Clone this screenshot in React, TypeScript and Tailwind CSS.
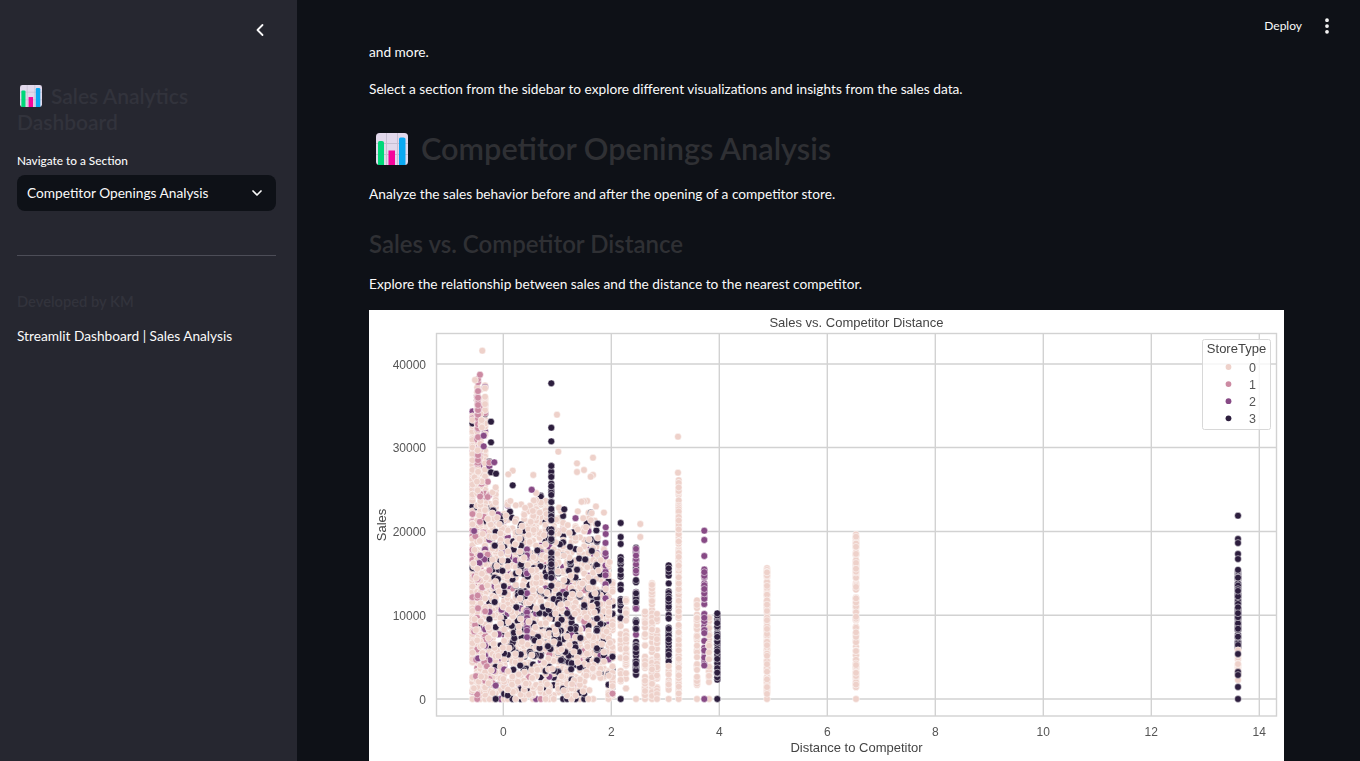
import React from 'react';
import { ChevronDown, ChevronLeft, EllipsisVertical } from 'lucide-react';

type Pt = [number, number, number];

const COLORS = ['#eed1ca', '#cc8aa2', '#874a85', '#2d1e3e'];

// small seeded generator so the scatter is the same on every load
let seed = 4211;
const rnd = () => {
  seed = (seed * 16807) % 2147483647;
  return seed / 2147483647;
};

const pick = (w: number[]) => {
  let r = rnd();
  for (let i = 0; i < w.length; i++) {
    r -= w[i];
    if (r <= 0) return i;
  }
  return 0;
};

const buildPoints = (): Pt[] => {
  const out: Pt[] = [];
  const col = (x: number, top: number, bottom: number, n: number, t: number) => {
    for (let i = 0; i < n; i++) out.push([x, top + rnd() * (bottom - top), t]);
  };

  // dense block of distances near zero
  for (let x = 472.5; x < 614; x += 3 + rnd() * 2) {
    const base = x < 476 ? 410 : x < 486 ? 385 : x < 492 ? 440 : x < 500 ? 475 : x < 560 ? 490 : x < 598 ? 500 : 535;
    const top = base + (x < 486 ? 0 : rnd() * 40);
    const w = x < 486 ? [0.8, 0.16, 0.03, 0.01] : x < 495 ? [0.7, 0.12, 0.08, 0.1] : [0.78, 0.02, 0.05, 0.15];
    const n = Math.round((696 - top) / (x < 486 ? 2 : 3.2));
    for (let i = 0; i < n; i++) {
      const y = top + Math.pow(rnd(), 0.9) * (696 - top);
      if (x > 588 && x < 606 && y > 678) continue;
      out.push([x, y, pick(w)]);
    }
    if (rnd() > 0.15) out.push([x, 699, pick([0.6, 0.05, 0.15, 0.2])]);
  }

  // separate columns on the right of the block
  col(620.7, 555, 620, 24, 3);
  col(620.7, 620, 690, 14, 0);
  col(626, 597, 690, 40, 0);
  col(636, 545, 675, 46, 3);
  col(636, 545, 640, 16, 2);
  col(645, 608, 696, 40, 0);
  col(652, 578, 696, 56, 0);
  col(657, 613, 696, 38, 0);
  col(668.7, 565, 662, 52, 3);
  col(668.7, 660, 690, 14, 0);
  col(678.7, 480, 696, 150, 0);
  col(697, 600, 687, 44, 0);
  col(709, 613, 683, 36, 0);
  col(704.3, 565, 667, 50, 2);
  col(717.3, 613, 680, 50, 3);
  col(767, 565, 696, 100, 0);
  col(856, 533, 692, 110, 0);
  col(1238, 645, 680, 16, 0);
  col(1238, 568, 650, 90, 3);

  [620.7, 636, 645, 652, 657, 668.7, 678.7, 697, 704.3, 709, 717.3, 767, 856, 1238].forEach((x) => {
    const t = x === 704.3 ? 2 : x === 717.3 || x === 1238 || x === 620.7 ? 3 : 0;
    out.push([x, 699, t]);
  });

  // shuffle so the hues overlap as in data order
  for (let i = out.length - 1; i > 0; i--) {
    const j = Math.floor(rnd() * (i + 1));
    [out[i], out[j]] = [out[j], out[i]];
  }

  // the dark runs that sit on top of the block
  const over: Pt[] = [];
  const addOver = (x: number, top: number, bottom: number, n: number, t: number) => {
    for (let i = 0; i < n; i++) over.push([x, top + rnd() * (bottom - top), t]);
  };
  for (let i = 0; i < 60; i++) over.push([510 + rnd() * 72, 612 + rnd() * 60, 3]);
  for (let i = 0; i < 70; i++) over.push([492 + rnd() * 105, 510 + rnd() * 100, 3]);
  addOver(527, 545, 640, 20, 2);
  addOver(521, 520, 600, 12, 3);
  addOver(597, 525, 665, 16, 3);
  addOver(605.5, 540, 600, 10, 2);
  addOver(478, 375, 470, 24, 1);
  for (let i = 0; i < 24; i++) over.push([474 + rnd() * 14, 470 + rnd() * 215, 1]);
  for (let i = 0; i < 12; i++) over.push([474 + rnd() * 30, 510 + rnd() * 170, 2]);

  // pale marks drawn last, they break up the dark runs
  const pale: Pt[] = [];
  for (let i = 0; i < 220; i++) pale.push([486 + rnd() * 126, 500 + rnd() * 192, 0]);
  for (let i = 0; i < 30; i++) pale.push([473 + rnd() * 10, 400 + rnd() * 290, 0]);

  // column that stays visible through the block
  const dark: Pt[] = [];
  for (let i = 0; i < 34; i++) dark.push([551.3, 465 + rnd() * 125, 3]);

  // outliers read off the picture
  const top: Pt[] = [
    [482.3, 350.7, 0], [480, 374.7, 1], [475, 380, 0], [551.3, 383.3, 3], [557, 414.7, 0],
    [491, 421.7, 3], [551.3, 427.7, 3], [483.7, 435.7, 2], [491, 442.3, 3], [551.3, 441.3, 3],
    [483.7, 446.3, 2], [558.3, 451.7, 0], [678, 436.7, 0], [678, 472.7, 0], [494.3, 462.3, 2],
    [491, 472.3, 3], [496, 473.7, 3], [512.7, 470.7, 0], [508.3, 474.3, 0], [533.3, 475, 0],
    [577, 463.3, 0], [593, 457.7, 0], [584, 470, 0], [577, 472, 0], [593, 475, 0], [590.7, 476.7, 0],
    [512.7, 485.3, 3], [531.7, 489.7, 2], [564.3, 509.3, 3], [597.7, 523.7, 3], [620.7, 523, 3],
    [640.3, 524, 0], [704.3, 530.7, 2], [605.7, 527.3, 2], [605.7, 534, 2], [620.7, 537, 3],
    [640.3, 537, 0], [620.7, 544, 3], [704.3, 540, 2], [704.3, 556, 2],
    [1238, 515.7, 3], [1238, 539, 3], [1238, 543, 3], [1238, 554, 3], [1238, 559, 3],
    [1238, 654, 3], [1238, 672, 3], [1238, 675, 3], [1238, 687, 3],
  ];
  return [...out, ...over, ...pale, ...dark, ...top];
};

const POINTS = buildPoints();

const ChartEmoji = ({ className }: { className: string }) => (
  <svg viewBox="0 0 32 32" className={className}>
    <rect width="32" height="32" rx="3.5" fill="#e2d9ec" />
    <path d="M0 10.5H32M0 21.5H32M10.5 0V32M21.5 0V32" stroke="#c6bfd2" strokeWidth="1" />
    <path d="M2 32V9.5Q2 8 3.5 8H6Q8 8 8 9.5V32Z" fill="#00d879" />
    <rect x="12.5" y="17.5" width="6.5" height="14.5" fill="#f5069b" />
    <path d="M23 32V6Q23 4.5 24.5 4.5H27.5Q29.5 4.5 29.5 6V32Z" fill="#0aa9f2" />
  </svg>
);

const XTICKS = [0, 2, 4, 6, 8, 10, 12, 14];
const YTICKS: [number, string][] = [[364, '40000'], [447.5, '30000'], [531.5, '20000'], [615.3, '10000'], [699, '0']];

const ScatterPlot = () => (
  <svg viewBox="369 310 915 460" className="block h-[460px] w-[915px] bg-white blur-[0.3px]" fontFamily="'Liberation Sans', Arial, sans-serif">
    {XTICKS.map((t) => (
      <line key={t} x1={503.3 + t * 54} x2={503.3 + t * 54} y1={333.5} y2={716} stroke="#d2d2d2" strokeWidth="1.4" />
    ))}
    {YTICKS.map(([y]) => (
      <line key={y} x1={436.5} x2={1276.5} y1={y} y2={y} stroke="#d2d2d2" strokeWidth="1.4" />
    ))}
    <rect x="436.5" y="333.5" width="840" height="382.5" fill="none" stroke="#d2d2d2" strokeWidth="1.4" />

    {POINTS.map(([x, y, t], i) => (
      <circle key={i} cx={x} cy={y} r="3.4" fill={COLORS[t]} stroke="#ffffff" strokeWidth="0.5" />
    ))}

    {/* legend */}
    <rect x="1202.5" y="339.5" width="68" height="90" rx="2" fill="#ffffff" fillOpacity="0.8" stroke="#d8d8d8" />
    <text x="1236.5" y="353" fontSize="13" fill="#444" textAnchor="middle">StoreType</text>
    {COLORS.map((c, i) => (
      <g key={c}>
        <circle cx="1228.5" cy={367 + i * 17.1} r="2.9" fill={c} />
        <text x="1252.5" y={371.5 + i * 17.1} fontSize="12.5" fill="#555" textAnchor="middle">{i}</text>
      </g>
    ))}

    <text x="856.5" y="327" fontSize="13" fill="#444" textAnchor="middle">Sales vs. Competitor Distance</text>
    {XTICKS.map((t) => (
      <text key={t} x={503.3 + t * 54} y="736" fontSize="12" fill="#555" textAnchor="middle">{t}</text>
    ))}
    {YTICKS.map(([y, l]) => (
      <text key={l} x="426" y={y + 4.5} fontSize="12" fill="#555" textAnchor="end">{l}</text>
    ))}
    <text x="856.5" y="752" fontSize="13" fill="#444" textAnchor="middle">Distance to Competitor</text>
    <text transform="translate(386 525) rotate(-90)" fontSize="13" fill="#444" textAnchor="middle">Sales</text>
  </svg>
);

export default function App() {
  return (
    <div className="flex h-[761px] w-[1360px] overflow-hidden bg-[#0e1117] font-['Lato',sans-serif] text-[13.7px] text-[#fafafa]">
      {/* Sidebar */}
      <aside className="flex w-[297px] shrink-0 flex-col bg-[#262730] pr-[21px] pl-[17px]">
        <div className="flex h-[60px] items-center justify-end pr-[6px]">
          <ChevronLeft className="h-5 w-5 text-[#fafafa]" strokeWidth={2.2} />
        </div>
        <h2 className="mt-[23px] text-[21px] leading-[26px] font-semibold text-[#32333c]">
          <ChartEmoji className="mr-[9px] ml-[3px] inline-block h-[22px] w-[22px] align-[-3px]" />
          Sales Analytics Dashboard
        </h2>
        <label className="mt-[16px] text-[11.8px] leading-[20px] font-medium">Navigate to a Section</label>
        <div className="mt-[4px] flex h-[36px] items-center justify-between rounded-lg bg-[#0e1117] pr-[11px] pl-[10px]">
          <span className="pt-[1px]">Competitor Openings Analysis</span>
          <ChevronDown className="h-4 w-4" strokeWidth={2.5} />
        </div>
        <hr className="mt-[44px] border-t border-[#4c4d57]" />
        <h3 className="mt-[35px] text-[14.7px] leading-[20px] font-semibold text-[#32333c]">Developed by KM</h3>
        <p className="mt-[15px] leading-[20px]">Streamlit Dashboard | Sales Analysis</p>
      </aside>

      {/* Main */}
      <main className="relative min-w-0 flex-1 overflow-hidden pt-[42px] pl-[72px]">
        <div className="absolute top-[16px] right-[23px] flex items-center gap-[15px]">
          <span className="text-[12px] leading-[20px]">Deploy</span>
          <EllipsisVertical className="h-5 w-5" strokeWidth={2.5} />
        </div>
        <p className="leading-[20px]">and more.</p>
        <p className="mt-[17px] leading-[20px]">
          Select a section from the sidebar to explore different visualizations and insights from the sales data.
        </p>
        <h1 className="mt-[28px] flex items-center text-[30.7px] leading-[44px] font-semibold text-[#2f3034]">
          <ChartEmoji className="mr-[13px] ml-[7px] h-[32px] w-[32px]" />
          Competitor Openings Analysis
        </h1>
        <p className="mt-[13px] leading-[20px]">Analyze the sales behavior before and after the opening of a competitor store.</p>
        <h2 className="mt-[24px] text-[24px] leading-[32px] font-semibold text-[#2f3034]">Sales vs. Competitor Distance</h2>
        <p className="mt-[14px] leading-[20px]">Explore the relationship between sales and the distance to the nearest competitor.</p>
        <div className="mt-[16px]">
          <ScatterPlot />
        </div>
      </main>
    </div>
  );
}
